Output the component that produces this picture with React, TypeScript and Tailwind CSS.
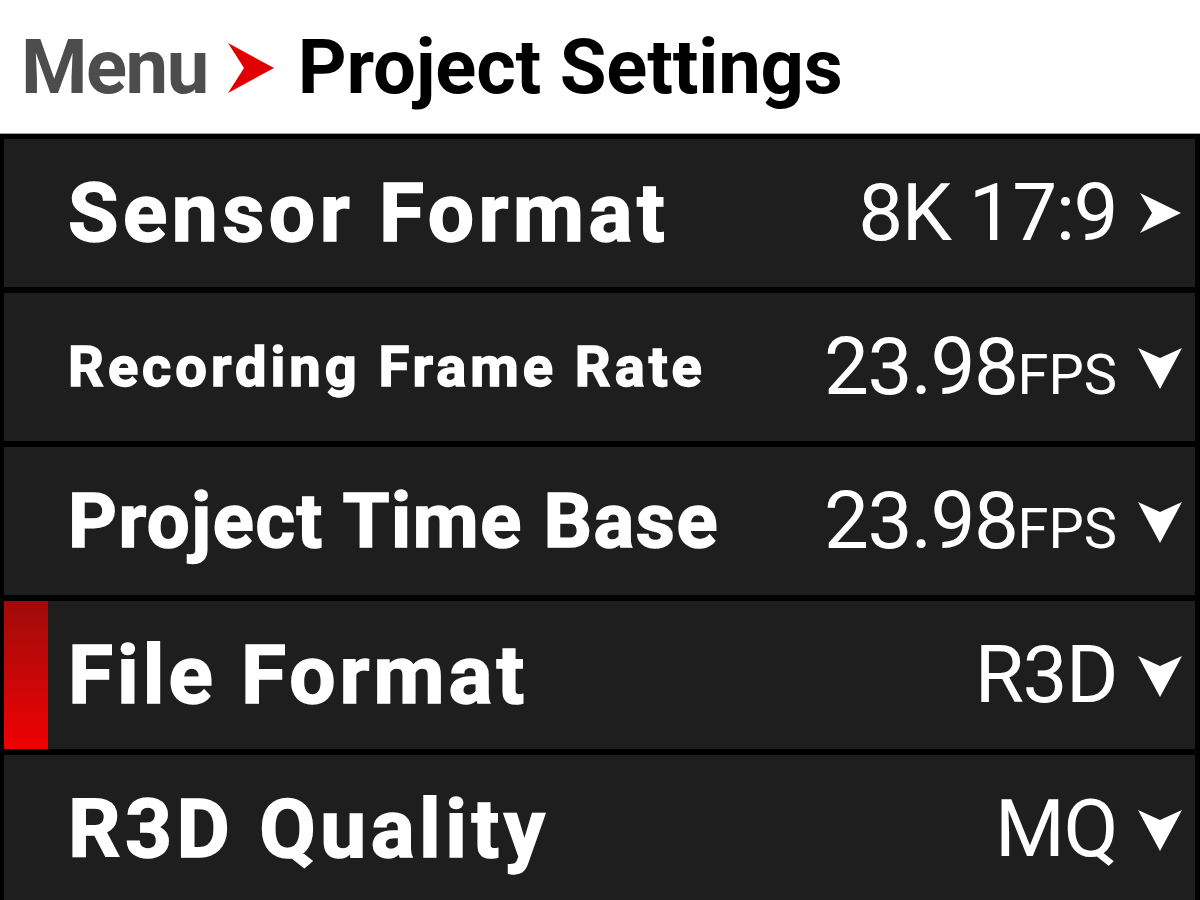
type Row = {
  label: string
  labelClass: string
  value: string
  unit?: string
  icon: 'right' | 'down'
  selected?: boolean
}

const rows: Row[] = [
  { label: 'Sensor Format', labelClass: 'text-[82px] tracking-[4.5px]', value: '8K 17:9', icon: 'right' },
  { label: 'Recording Frame Rate', labelClass: 'text-[56px] tracking-[4px]', value: '23.98', unit: 'FPS', icon: 'down' },
  { label: 'Project Time Base', labelClass: 'text-[76px] tracking-[1.6px]', value: '23.98', unit: 'FPS', icon: 'down' },
  { label: 'File Format', labelClass: 'text-[82px] tracking-[4px]', value: 'R3D', icon: 'down', selected: true },
  { label: 'R3D Quality', labelClass: 'text-[82px] tracking-[4.5px]', value: 'MQ', icon: 'down' },
]

function ArrowIcon({ dir }: { dir: 'right' | 'down' }) {
  if (dir === 'right') {
    return (
      <svg width="44" height="44" viewBox="0 0 44 44" className="shrink-0">
        <path d="M2 2 L43 22 L2 42 L14 22 Z" fill="white" />
      </svg>
    )
  }
  return (
    <svg width="46" height="46" viewBox="0 0 46 46" className="shrink-0">
      <path d="M1 4 L23 14 L45 4 L23 45 Z" fill="white" />
    </svg>
  )
}

export default function App() {
  return (
    <div className="flex h-[900px] w-[1200px] flex-col overflow-hidden bg-black font-['Roboto',sans-serif]">
      <header className="flex h-[134px] shrink-0 items-center border-b border-gray-400 bg-white pl-[21px]">
        <span className="text-[76px] font-bold leading-none tracking-[-1.5px] text-[#4d4d4d]">Menu</span>
        <svg width="46" height="50" viewBox="0 0 46 50" className="ml-[20px] mt-[2px] shrink-0">
          <path d="M0 0 L46 25 L0 50 L16 25 Z" fill="#e00000" />
        </svg>
        <span className="ml-[24px] text-[76px] font-bold leading-none tracking-[-0.2px] text-black">Project Settings</span>
      </header>

      <div className="flex flex-1 flex-col gap-[6px] pb-[6px] pl-[4px] pr-[5px] pt-[5px]">
        {rows.map((row) => (
          <div key={row.label} className="flex h-[148px] items-center bg-[#1e1e1e]">
            <div
              className={`h-full w-[44px] shrink-0 ${row.selected ? 'bg-gradient-to-b from-[#a00a0a] to-[#f00000]' : ''}`}
            />
            <span className={`ml-[20px] font-bold leading-none text-white [-webkit-text-stroke:1.5px_white] ${row.labelClass}`}>
              {row.label}
            </span>
            <div className="ml-auto flex items-baseline pr-[20px]">
              <span className="text-[80px] leading-none tracking-[-1.5px] text-white">{row.value}</span>
              {row.unit ? <span className="text-[56px] leading-none text-white">{row.unit}</span> : null}
            </div>
            <div className="mr-[12px] flex w-[46px] items-center justify-center">
              <ArrowIcon dir={row.icon} />
            </div>
          </div>
        ))}
      </div>
    </div>
  )
}
